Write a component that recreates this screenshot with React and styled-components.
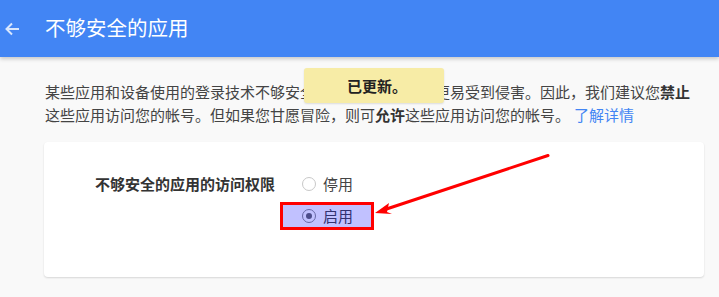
import React from "react";
import styled, { createGlobalStyle } from "styled-components";

const Global = createGlobalStyle`
  html, body { margin: 0; padding: 0; background: #f9f9f9; }
  body { font-family: "Noto Sans CJK SC", "Noto Sans", sans-serif; }
  * { box-sizing: border-box; }
`;

const Page = styled.div`
  position: relative;
  width: 719px;
  height: 297px;
  overflow: hidden;
  background: #f9f9f9;
`;

const Header = styled.header`
  height: 57px;
  background: #4285f4;
  display: flex;
  align-items: center;
  box-shadow: 0 2px 4px rgba(0, 0, 0, 0.2);
  position: relative;
  z-index: 1;
`;

const BackButton = styled.button`
  width: 45px;
  height: 57px;
  padding: 0 0 0 4px;
  border: 0;
  background: transparent;
  display: flex;
  align-items: center;
  color: rgba(255, 255, 255, 0.8);
`;

const Title = styled.h1`
  margin: 0;
  font-size: 20.5px;
  font-weight: 400;
  color: #fff;
  line-height: 1;
  padding-bottom: 2px;
`;

const Main = styled.main`
  padding: 23px 15px 0 45px;
`;

const Intro = styled.p`
  margin: 0;
  font-size: 15px;
  line-height: 23px;
  color: #444;
`;

const Strong = styled.b`
  font-weight: 700;
  color: #333;
`;

const Link = styled.a`
  color: #4285f4;
  text-decoration: none;
  margin-left: 4px;
`;

const Card = styled.section`
  margin: 16px 0 0 -1px;
  width: 660px;
  background: #fff;
  border-radius: 4px;
  box-shadow: 0 1px 2px rgba(0, 0, 0, 0.14);
  padding: 31px 0 50px 51px;
  display: flex;
  align-items: flex-start;
`;

const Label = styled.div`
  width: 207px;
  font-size: 15px;
  line-height: 22px;
  font-weight: 700;
  color: #333;
`;

const Options = styled.div`
  display: flex;
  flex-direction: column;
  gap: 10px;
`;

const Option = styled.label`
  position: relative;
  display: flex;
  align-items: center;
  gap: 7px;
  height: 22px;
  font-size: 15px;
  line-height: 22px;
  color: #444;
  &::after {
    content: "";
    display: ${(p) => (p.$highlight ? "block" : "none")};
    position: absolute;
    left: -22px;
    right: -21px;
    top: -3px;
    bottom: -3px;
    background: rgba(0, 0, 255, 0.245);
    border: 3px solid #ff0000;
  }
`;

const Radio = styled.span`
  width: 14px;
  height: 14px;
  border-radius: 50%;
  border: 1px solid ${(p) => (p.$checked ? "#8a8a8a" : "#c8c8c8")};
  background: #fff;
  display: flex;
  align-items: center;
  justify-content: center;
  &::before {
    content: "";
    display: ${(p) => (p.$checked ? "block" : "none")};
    width: 6px;
    height: 6px;
    border-radius: 50%;
    background: #666;
  }
`;

const Toast = styled.div`
  position: absolute;
  left: 304px;
  top: 68px;
  width: 140px;
  height: 35px;
  background: #f7eca6;
  border-radius: 3px;
  box-shadow: 0 1px 2px rgba(0, 0, 0, 0.12);
  display: flex;
  align-items: center;
  padding-left: 43px;
  font-size: 15px;
  font-weight: 700;
  color: #222;
  z-index: 2;
`;

const Annotation = styled.svg`
  position: absolute;
  left: 0;
  top: 0;
  pointer-events: none;
  z-index: 3;
`;

export default function App() {
  return (
    <>
      <Global />
      <Page>
        <Header>
          <BackButton aria-label="返回">
            <svg width="16" height="16" viewBox="0 0 16 16">
              <path d="M15 8H2.5M8 2.5L2.5 8L8 13.5" fill="none" stroke="currentColor" strokeWidth="2" />
            </svg>
          </BackButton>
          <Title>不够安全的应用</Title>
        </Header>
        <Main>
          <Intro>
            某些应用和设备使用的登录技术不够安全，这会使您的帐号更易受到侵害。因此，我们建议您<Strong>禁止</Strong>这些应用访问您的帐号。但如果您甘愿冒险，则可<Strong>允许</Strong>这些应用访问您的帐号。
            <Link href="#">了解详情</Link>
          </Intro>
          <Card>
            <Label>不够安全的应用的访问权限</Label>
            <Options>
              <Option>
                <Radio />
                停用
              </Option>
              <Option $highlight>
                <Radio $checked />
                启用
              </Option>
            </Options>
          </Card>
        </Main>
        <Toast>已更新。</Toast>
        <Annotation width="719" height="297" viewBox="0 0 719 297">
          <line x1="548" y1="155.5" x2="385" y2="209.5" stroke="#ff0000" strokeWidth="3" strokeLinecap="round" />
          <polygon points="375,213 389,203 387,212 392,214" fill="#ff0000" />
        </Annotation>
      </Page>
    </>
  );
}
